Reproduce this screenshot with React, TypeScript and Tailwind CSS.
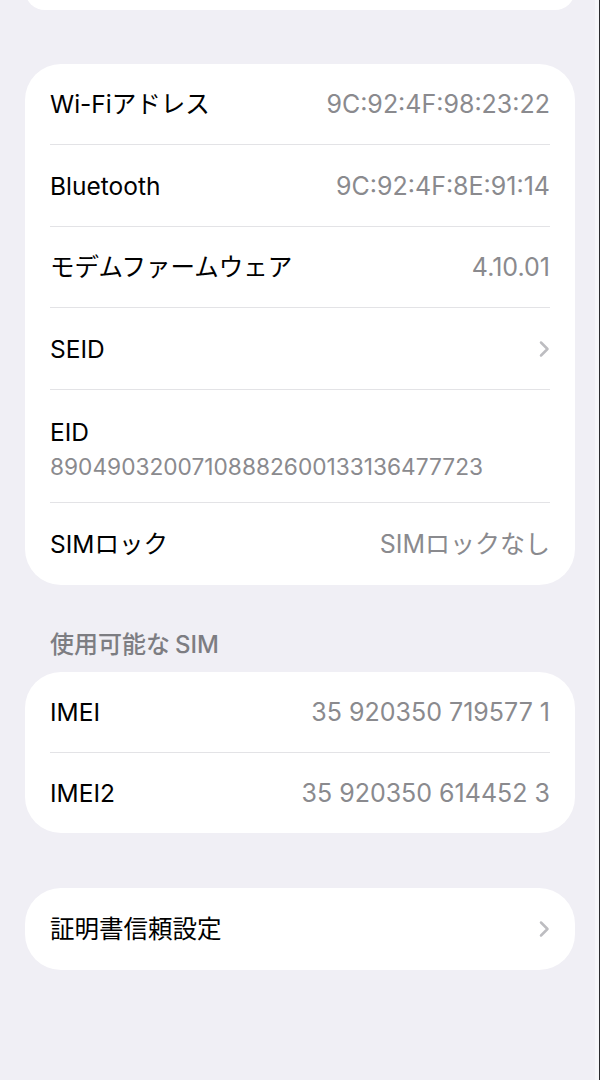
import React from "react";

const font = "font-['Inter','Noto_Sans_CJK_JP',sans-serif]";

const Chevron = () => (
	<svg width="12" height="18" viewBox="0 0 12 18" fill="none" className="shrink-0">
		<path
			d="M3 2.5l6.5 6.5-6.5 6.5"
			stroke="#bdbdc1"
			strokeWidth="2.5"
			strokeLinecap="round"
			strokeLinejoin="round"
		/>
	</svg>
);

interface RowProps {
	label: string;
	value?: string;
	chevron?: boolean;
	last?: boolean;
	h: string;
}

const Row = ({ label, value, chevron, last, h }: RowProps) => (
	<div className="px-[25px]">
		<div
			className={`flex items-center justify-between ${h} ${
				last ? "" : "border-b border-[#e3e3e6]"
			}`}
		>
			<span className="text-[24.5px] leading-[30px] text-black">{label}</span>
			{value && (
				<span className="text-[25px] leading-[30px] text-[#8a8a8e]">{value}</span>
			)}
			{chevron && <Chevron />}
		</div>
	</div>
);

const App = () => {
	return (
		<div className={`flex h-[1080px] w-full overflow-hidden bg-[#f0eff5] ${font}`}>
			<div className="flex-1">
				{/* previous group, scrolled off */}
				<div className="ml-[25px] mr-[20px] -mt-[30px] h-[40px] rounded-[36px] bg-white" />

				<div className="ml-[25px] mr-[20px] mt-[54px] rounded-[36px] bg-white">
					<Row label="Wi-Fiアドレス" value="9C:92:4F:98:23:22" h="h-[81px]" />
					<Row label="Bluetooth" value="9C:92:4F:8E:91:14" h="h-[82px]" />
					<Row label="モデムファームウェア" value="4.10.01" h="h-[81px]" />
					<Row label="SEID" chevron h="h-[82px]" />
					<div className="px-[25px]">
						<div className="h-[113px] border-b border-[#e3e3e6] pt-[27px]">
							<div className="text-[24.5px] leading-[30px] text-black">EID</div>
							<div className="mt-[7px] text-[22.7px] leading-[26px] text-[#8a8a8e]">
								89049032007108882600133136477723
							</div>
						</div>
					</div>
					<Row label="SIMロック" value="SIMロックなし" last h="h-[82px]" />
				</div>

				<div className="mt-[46px] px-[50px] text-[24px] font-medium leading-[28px] text-[#7d7d82]">
					使用可能な<span className="ml-[5px]">SIM</span>
				</div>

				<div className="ml-[25px] mr-[20px] mt-[13px] rounded-[36px] bg-white">
					<Row label="IMEI" value="35 920350 719577 1" h="h-[81px]" />
					<Row label="IMEI2" value="35 920350 614452 3" last h="h-[80px]" />
				</div>

				<div className="ml-[25px] mr-[20px] mt-[55px] rounded-[36px] bg-white">
					<Row label="証明書信頼設定" chevron last h="h-[82px]" />
				</div>
			</div>
			<div className="w-[5px] shrink-0 border-r border-[#2b2b2e] bg-[#f6f6f9]" />
		</div>
	);
};

export default App;
